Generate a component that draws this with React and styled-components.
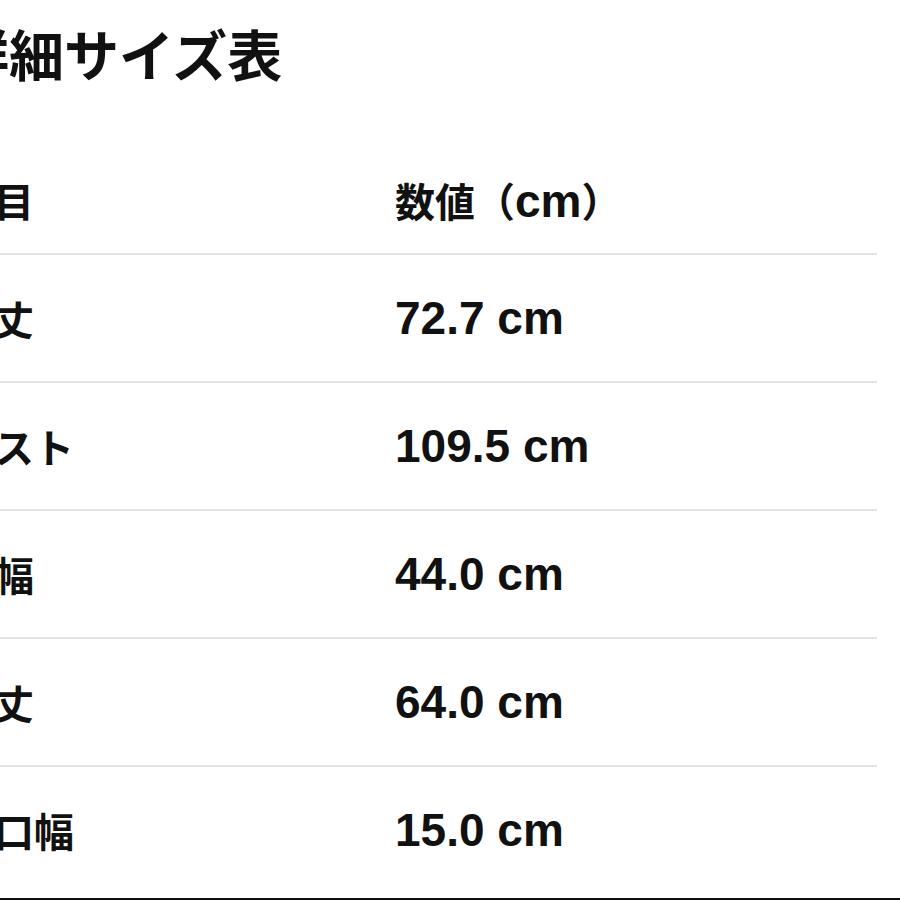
import React from 'react'
import styled, { createGlobalStyle } from 'styled-components'

const rows = [
  { label: '着丈', value: '72.7 cm' },
  { label: 'バスト', value: '109.5 cm' },
  { label: '肩幅', value: '44.0 cm' },
  { label: '袖丈', value: '64.0 cm' },
  { label: '袖口幅', value: '15.0 cm' },
]

const App = () => (
  <>
    <GlobalStyle />
    <Page>
      <Title>詳細サイズ表</Title>
      <Table>
        <HeadRow>
          <LabelCell>項目</LabelCell>
          <ValueHead>
            数値<Paren>（</Paren><Latin>cm</Latin><Paren>）</Paren>
          </ValueHead>
        </HeadRow>
        {rows.map((row, key) => (
          <Row key={key} last={key === rows.length - 1}>
            <LabelCell>{row.label}</LabelCell>
            <ValueCell>{row.value}</ValueCell>
          </Row>
        ))}
      </Table>
      <BottomEdge />
    </Page>
  </>
)

const GlobalStyle = createGlobalStyle`
html, body {
  margin: 0;
  padding: 0;
  background: #ffffff;
  overflow: hidden;
}
body {
  font-family: "Noto Sans CJK JP", "Noto Sans", sans-serif;
  color: #111111;
}
`

const Page = styled.div`
width: 923px;
margin-left: -46px;
height: 900px;
display: flex;
flex-direction: column;
`

const Title = styled.div`
height: 104px;
line-height: 104px;
font-size: 55px;
font-weight: 700;
white-space: nowrap;
`

const Table = styled.div`
margin-top: 43px;
display: flex;
flex-direction: column;
`

const Row = styled.div`
display: grid;
grid-template-columns: 441px 1fr;
align-items: center;
height: ${props => props.last ? '126px' : '128px'};
box-sizing: border-box;
border-bottom: ${props => props.last ? 'none' : '2px solid #e4e4e4'};
`

const HeadRow = styled(Row)`
height: 108px;
border-bottom: 2px solid #e4e4e4;
`

const LabelCell = styled.div`
font-size: 40px;
font-weight: 700;
white-space: nowrap;
`

const ValueHead = styled.div`
font-size: 40px;
font-weight: 700;
white-space: nowrap;
`

const Paren = styled.span`
font-family: "Noto Sans CJK JP", sans-serif;
`

const Latin = styled.span`
font-family: "Liberation Sans", Arial, sans-serif;
font-size: 46px;
`

const ValueCell = styled.div`
font-family: "Liberation Sans", Arial, sans-serif;
font-size: 46px;
font-weight: 700;
white-space: nowrap;
`

const BottomEdge = styled.div`
margin-top: 5px;
margin-right: -23px;
height: 3px;
background: #111111;
`

export default App
